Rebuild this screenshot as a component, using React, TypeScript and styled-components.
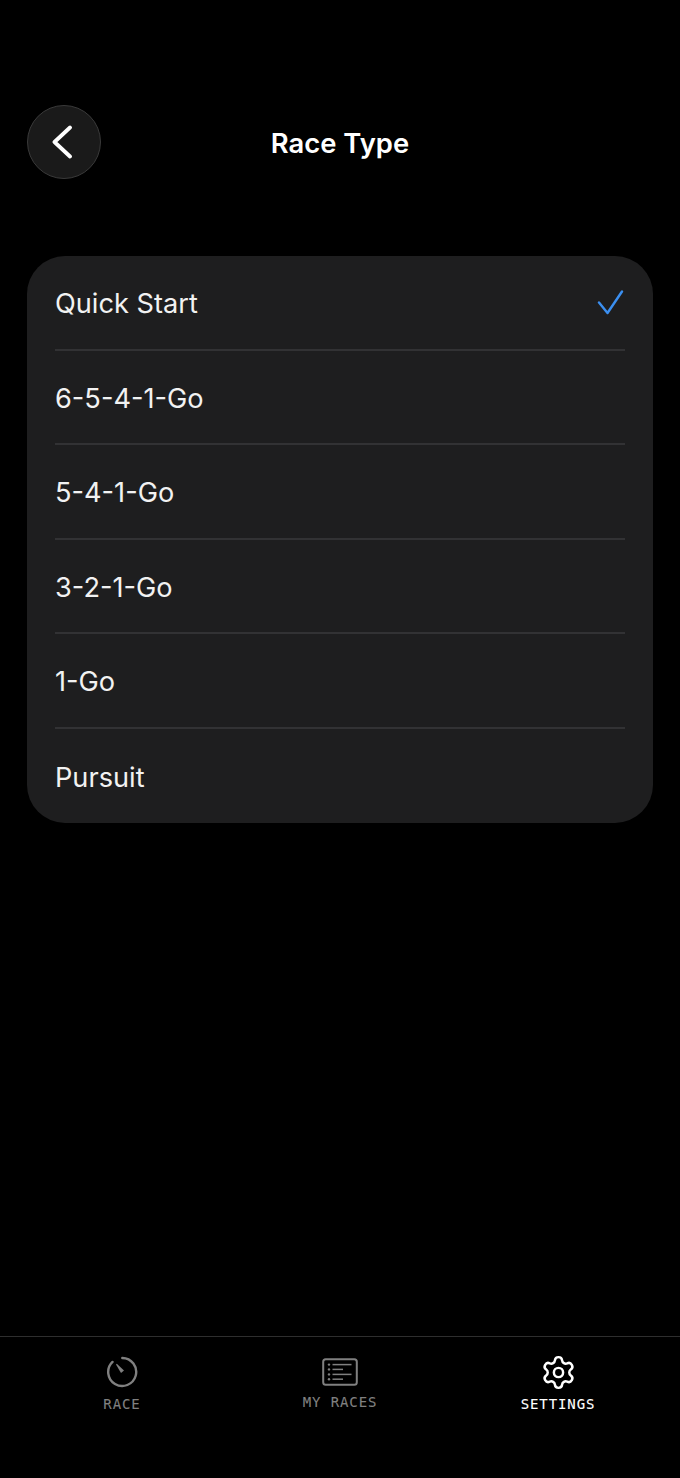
import React from "react";
import styled, { createGlobalStyle } from "styled-components";
import { Settings } from "lucide-react";

const RACE_TYPES = ["Quick Start", "6-5-4-1-Go", "5-4-1-Go", "3-2-1-Go", "1-Go", "Pursuit"];
const SELECTED = "Quick Start";

const GlobalStyle = createGlobalStyle`
  html, body {
    margin: 0;
    padding: 0;
    background: #000;
  }
`;

const Screen = styled.div`
  height: 1478px;
  display: flex;
  flex-direction: column;
  background: #000;
  font-family: "Inter", "Liberation Sans", sans-serif;
  color: #fff;
  overflow: hidden;
`;

const Header = styled.header`
  display: grid;
  grid-template-columns: 74px 1fr 74px;
  align-items: center;
  margin: 105px 27px 0;
`;

const BackButton = styled.button`
  width: 74px;
  height: 74px;
  padding: 0;
  box-sizing: border-box;
  display: flex;
  align-items: center;
  justify-content: center;
  border-radius: 50%;
  border: 1px solid #3a3a3a;
  background: #1a1a1a;
`;

const Title = styled.h1`
  margin: 0;
  padding-top: 2px;
  text-align: center;
  font-size: 27.4px;
  font-weight: 600;
  line-height: 72px;
`;

const Card = styled.ul`
  list-style: none;
  margin: 77px 27px 0;
  padding: 0 28px;
  background: #1e1e1f;
  border-radius: 38px;
`;

const Row = styled.li`
  height: 94.5px;
  padding-top: 3px;
  box-sizing: border-box;
  display: flex;
  align-items: center;
  justify-content: space-between;
  font-size: 27.2px;
  color: #f2f2f2;
  border-bottom: 2px solid #323234;

  &:last-child {
    border-bottom: none;
  }
`;

const TabBar = styled.nav`
  margin-top: auto;
  height: 142px;
  box-sizing: border-box;
  padding: 18px 13px 0;
  display: grid;
  grid-template-columns: repeat(3, 218px);
  border-top: 1px solid #2e2e2e;
`;

const Tab = styled.div<{ $active?: boolean }>`
  display: flex;
  flex-direction: column;
  align-items: center;
  color: ${(p) => (p.$active ? "#ffffff" : "#808080")};
`;

const IconSlot = styled.div`
  height: 34px;
  display: flex;
  align-items: center;
  justify-content: center;
`;

const TabLabel = styled.span<{ $offset: number }>`
  margin-top: ${(p) => p.$offset}px;
  font-family: "DejaVu Sans Mono", "Liberation Mono", monospace;
  font-size: 14px;
  line-height: 18px;
  letter-spacing: 0.9px;
  -webkit-text-stroke: 0.1px currentColor;
`;

const BackIcon = () => (
  <svg width="24" height="36" viewBox="0 0 24 36" fill="none">
    <path d="M18 3.5 L2.5 18 L18 32.5" stroke="#fff" strokeWidth="3.8" strokeLinecap="round" strokeLinejoin="round" />
  </svg>
);

const CheckIcon = () => (
  <svg width="28" height="28" viewBox="0 0 28 28" fill="none">
    <path d="M2 12.5 L10.5 23 L25 1.5" stroke="#3b8ff0" strokeWidth="2.4" strokeLinecap="round" strokeLinejoin="round" />
  </svg>
);

const StopwatchIcon = () => (
  <svg width="32" height="32" viewBox="0 0 32 32" fill="none">
    <path
      d="M16.3 2 A14 14 0 1 1 6.5 5.9"
      stroke="currentColor"
      strokeWidth="2.4"
      strokeLinecap="round"
    />
    <path d="M10 8.4 L10.8 7.8 L18 14.6 L15 17 Z" fill="currentColor" />
  </svg>
);

const ListIcon = () => (
  <svg width="36" height="28" viewBox="0 0 36 28" fill="none">
    <rect x="1.2" y="1.2" width="33.6" height="25.6" rx="2.5" stroke="currentColor" strokeWidth="2" />
    <g fill="currentColor">
      <circle cx="7" cy="6.6" r="1.2" />
      <circle cx="7" cy="11.4" r="1.2" />
      <circle cx="7" cy="16.4" r="1.2" />
      <circle cx="7" cy="21.2" r="1.2" />
    </g>
    <g stroke="currentColor" strokeWidth="1.5">
      <path d="M10.5 6.6 H29.5" />
      <path d="M10.5 11.4 H21" />
      <path d="M10.5 16.4 H29.5" />
      <path d="M10.5 21.2 H21" />
    </g>
  </svg>
);

export default function App() {
  return (
    <Screen>
      <GlobalStyle />
      <Header>
        <BackButton>
          <BackIcon />
        </BackButton>
        <Title>Race Type</Title>
      </Header>

      <Card>
        {RACE_TYPES.map((name) => (
          <Row key={name}>
            {name}
            {name === SELECTED && <CheckIcon />}
          </Row>
        ))}
      </Card>

      <TabBar>
        <Tab>
          <IconSlot>
            <StopwatchIcon />
          </IconSlot>
          <TabLabel $offset={6}>RACE</TabLabel>
        </Tab>
        <Tab>
          <IconSlot>
            <ListIcon />
          </IconSlot>
          <TabLabel $offset={4}>MY RACES</TabLabel>
        </Tab>
        <Tab $active>
          <IconSlot>
            <Settings size={37} strokeWidth={1.6} />
          </IconSlot>
          <TabLabel $offset={6}>SETTINGS</TabLabel>
        </Tab>
      </TabBar>
    </Screen>
  );
}
